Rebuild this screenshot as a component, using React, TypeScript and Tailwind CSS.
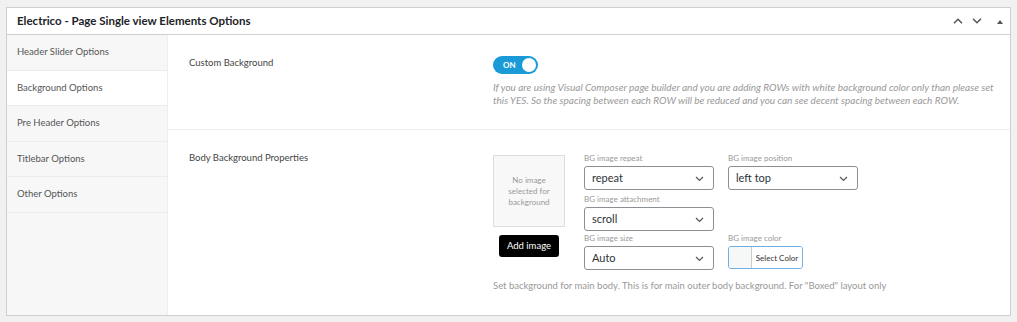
import React from "react";

const font = { fontFamily: 'Lato, "Noto Sans", sans-serif' };

function Chevron() {
  return (
    <svg width="9" height="6" viewBox="0 0 9 6" className="absolute right-[9px] top-[9px]">
      <path d="M1 1l3.5 3.5L8 1" fill="none" stroke="#555" strokeWidth="1.2" />
    </svg>
  );
}

function Select({ value }: { value: string }) {
  return (
    <div className="relative w-[130px] h-[24px] border border-[#8c8f94] rounded-[3px] bg-white pl-[7px] text-[11px] leading-[22px] text-[#2c3338]">
      {value}
      <Chevron />
    </div>
  );
}

function Label({ children }: { children: React.ReactNode }) {
  return <div className="text-[8px] leading-[11px] text-[#999] mb-[2px]">{children}</div>;
}

export default function App() {
  const items = ["Header Slider Options", "Background Options", "Pre Header Options", "Titlebar Options", "Other Options"];
  return (
    <div className="w-[1017px] h-[322px] bg-[#f1f1f1] pt-[7px] pl-[6px]" style={font}>
      <div className="w-[1005px] h-[309px] border border-[#ccd0d4] bg-white flex flex-col">
        <div className="h-[27px] border-b border-[#ccd0d4] flex items-center pl-[10px] pr-[7px] shrink-0">
          <div className="text-[11.5px] font-bold text-[#1d2327]">Electrico - Page Single view Elements Options</div>
          <div className="ml-auto flex items-center">
            <svg width="10" height="6" viewBox="0 0 10 6"><path d="M1 5.3l4-4 4 4" fill="none" stroke="#50575e" strokeWidth="1.5" /></svg>
            <svg width="10" height="6" viewBox="0 0 10 6" className="ml-[9px]"><path d="M1 0.7l4 4 4-4" fill="none" stroke="#50575e" strokeWidth="1.5" /></svg>
            <svg width="6" height="5" viewBox="0 0 6 5" className="ml-[15px] mt-[1px]"><path d="M0 5l3-4 3 4z" fill="#50575e" /></svg>
          </div>
        </div>
        <div className="flex flex-1">
          <div className="w-[161px] bg-[#f7f7f7] border-r border-[#eee] shrink-0">
            {items.map((it, i) => (
              <div
                key={it}
                className={`h-[35.5px] flex items-center pl-[10px] text-[9.5px] text-[#555] border-b border-[#ececec] ${i === 1 ? "bg-white" : ""}`}
              >
                {it}
              </div>
            ))}
          </div>
          <div className="flex-1 flex flex-col">
            <div className="h-[95px] border-b border-[#eee] flex pt-[21px] shrink-0">
              <div className="w-[325px] pl-[21px] text-[9.5px] text-[#444] leading-[14px]">Custom Background</div>
              <div className="flex-1 pr-[14px]">
                <div className="w-[45px] h-[18px] rounded-full bg-[#1a9bd7] relative">
                  <span className="absolute left-[10px] top-[2px] text-[8px] font-bold text-white leading-[14px]">ON</span>
                  <span className="absolute right-[2px] top-[2px] w-[14px] h-[14px] rounded-full bg-white" />
                </div>
                <div className="mt-[7px] text-[10px] italic text-[#999] leading-[13px]">
                  If you are using Visual Composer page builder and you are adding ROWs with white background color only than please set this YES. So the spacing between each ROW will be reduced and you can see decent spacing between each ROW.
                </div>
              </div>
            </div>
            <div className="flex pt-[21px]">
              <div className="w-[325px] pl-[21px] text-[9.5px] text-[#444] leading-[14px]">Body Background Properties</div>
              <div className="flex-1">
                <div className="flex">
                  <div className="w-[72px] flex flex-col items-center mt-[4px]">
                    <div className="w-[72px] h-[72px] border border-[#ddd] bg-[#f8f8f8] flex items-center justify-center text-center text-[8px] leading-[11px] text-[#999] px-[8px]">
                      No image selected for background
                    </div>
                    <div className="mt-[8px] w-[60px] h-[22px] bg-black rounded-[3px] text-white text-[9.5px] flex items-center justify-center">Add image</div>
                  </div>
                  <div className="ml-[19px] flex flex-col pt-[2px]">
                    <div className="flex gap-[14px]">
                      <div>
                        <Label>BG image repeat</Label>
                        <Select value="repeat" />
                      </div>
                      <div>
                        <Label>BG image position</Label>
                        <Select value="left top" />
                      </div>
                    </div>
                    <div className="mt-[4px]">
                      <Label>BG image attachment</Label>
                      <Select value="scroll" />
                    </div>
                    <div className="flex gap-[14px] mt-[2px]">
                      <div>
                        <Label>BG image size</Label>
                        <Select value="Auto" />
                      </div>
                      <div>
                        <Label>BG image color</Label>
                        <div className="w-[75px] h-[23px] border border-[#72aee6] rounded-[3px] flex overflow-hidden">
                          <div className="w-[23px] border-r border-[#ccc] bg-[#f6f7f7]" />
                          <div className="flex-1 text-[8px] text-[#333] flex items-center justify-center bg-white whitespace-nowrap">Select Color</div>
                        </div>
                      </div>
                    </div>
                  </div>
                </div>
                <div className="mt-[9px] text-[9.5px] text-[#999]">
                  Set background for main body. This is for main outer body background. For "Boxed" layout only
                </div>
              </div>
            </div>
          </div>
        </div>
      </div>
    </div>
  );
}
